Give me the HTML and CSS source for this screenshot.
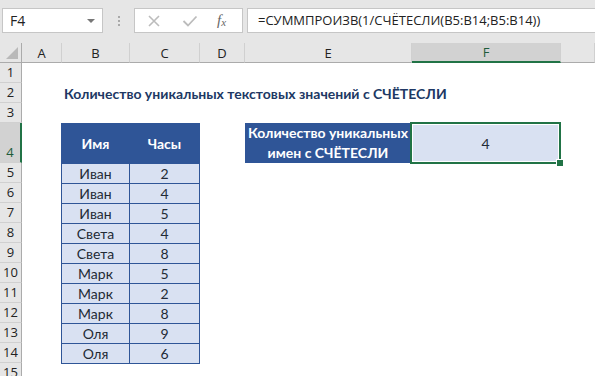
FILE: index.html
```html
<!DOCTYPE html>
<html>
	<head>
		<meta charset="utf-8" />
		<title>СЧЁТЕСЛИ</title>
		<link rel="stylesheet" href="styles.css">
	</head>
	<body>
		<div class="topbar">
			<div class="namebox">
				<span>F4</span>
				<span class="caret"></span>
			</div>
			<div class="grip"><i></i><i></i><i></i></div>
			<div class="fxbox">
				<svg width="14" height="14" viewBox="0 0 14 14"><path d="M2 2 L12 12 M12 2 L2 12" stroke="#bcbcbc" stroke-width="1.6" fill="none"/></svg>
				<svg width="16" height="14" viewBox="0 0 16 14"><path d="M1.5 7 L6 11.5 L14.5 2.5" stroke="#bcbcbc" stroke-width="1.8" fill="none"/></svg>
				<span class="fx">f<sub>x</sub></span>
			</div>
			<div class="formula">=СУММПРОИЗВ(1/СЧЁТЕСЛИ(B5:B14;B5:B14))</div>
		</div>

		<div class="sheet">
			<div class="corner"><span></span></div>
			<div class="ch">A</div>
			<div class="ch">B</div>
			<div class="ch">C</div>
			<div class="ch">D</div>
			<div class="ch">E</div>
			<div class="ch active">F</div>
			<div class="ch"></div>

			<div class="rh">1</div>
			<div class="rh">2</div>
			<div class="rh">3</div>
			<div class="rh active">4</div>
			<div class="rh">5</div>
			<div class="rh">6</div>
			<div class="rh">7</div>
			<div class="rh">8</div>
			<div class="rh">9</div>
			<div class="rh">10</div>
			<div class="rh">11</div>
			<div class="rh">12</div>
			<div class="rh">13</div>
			<div class="rh">14</div>
			<div class="rh">15</div>

			<div class="title">Количество уникальных текстовых значений с СЧЁТЕСЛИ</div>

			<table class="data">
				<tr class="head"><th>Имя</th><th>Часы</th></tr>
				<tr><td>Иван</td><td>2</td></tr>
				<tr><td>Иван</td><td>4</td></tr>
				<tr><td>Иван</td><td>5</td></tr>
				<tr><td>Света</td><td>4</td></tr>
				<tr><td>Света</td><td>8</td></tr>
				<tr><td>Марк</td><td>5</td></tr>
				<tr><td>Марк</td><td>2</td></tr>
				<tr><td>Марк</td><td>8</td></tr>
				<tr><td>Оля</td><td>9</td></tr>
				<tr><td>Оля</td><td>6</td></tr>
			</table>

			<div class="result">
				<div class="label">Количество уникальных<br>имен с СЧЁТЕСЛИ</div>
				<div class="value">4<span class="handle"></span></div>
			</div>
		</div>
	</body>
</html>
```

FILE: styles.css
```css
body {
	margin: 0;
	width: 595px;
	height: 376px;
	overflow: hidden;
	background: #fff;
	font-family: Lato, "Liberation Sans", sans-serif;
}

/* formula bar */
.topbar {
	height: 43px;
	background: #e6e6e6;
	display: flex;
	align-items: flex-start;
	padding-top: 8px;
	box-sizing: border-box;
	font-family: "Open Sans", "Noto Sans", sans-serif;
}

.namebox {
	margin-left: 2px;
	width: 101px;
	height: 25px;
	box-sizing: border-box;
	border: 1px solid #c6c6c6;
	background: #fff;
	display: flex;
	align-items: center;
	justify-content: space-between;
	padding: 0 7px 0 7px;
	font-size: 14px;
	color: #222;
}

.caret {
	width: 0;
	height: 0;
	border-left: 4px solid transparent;
	border-right: 4px solid transparent;
	border-top: 4px solid #777;
}

.grip {
	width: 31px;
	height: 25px;
	display: flex;
	flex-direction: column;
	align-items: center;
	justify-content: center;
	gap: 2px;
}

.grip i {
	width: 2px;
	height: 2px;
	background: #a9a9a9;
}

.fxbox {
	width: 109px;
	height: 25px;
	box-sizing: border-box;
	border: 1px solid #c6c6c6;
	background: #fff;
	display: flex;
	align-items: center;
	padding-left: 12px;
	gap: 21px;
}

.fx {
	font-family: "Liberation Serif", serif;
	font-style: italic;
	font-size: 15px;
	color: #666;
	margin-left: -2px;
}

.fx sub {
	font-size: 11px;
	vertical-align: -1px;
}

.formula {
	margin-left: 4px;
	flex: 1;
	height: 25px;
	box-sizing: border-box;
	border: 1px solid #c6c6c6;
	border-right: none;
	background: #fff;
	padding-left: 10px;
	font-size: 13px;
	line-height: 23px;
	color: #222;
	white-space: nowrap;
}

/* sheet grid */
.sheet {
	display: grid;
	grid-template-columns: 22px 40px 68px 70px 45px 167px 149px 34px;
	grid-template-rows: 20px 20px 20px 20px 40px repeat(11, 20px);
}

.corner {
	background: #e6e6e6;
	border-right: 1px solid #ababab;
	border-bottom: 1px solid #ababab;
	box-sizing: border-box;
	position: relative;
}

.corner span {
	position: absolute;
	right: 3px;
	bottom: 3px;
	width: 0;
	height: 0;
	border-left: 12px solid transparent;
	border-bottom: 12px solid #b9b9b9;
}

.ch {
	background: #e6e6e6;
	border-right: 1px solid #d0d0d0;
	border-bottom: 1px solid #ababab;
	box-sizing: border-box;
	font-family: "Open Sans", "Noto Sans", sans-serif;
	font-size: 13px;
	color: #222;
	display: flex;
	align-items: center;
	justify-content: center;
}

.ch.active {
	background: #d2d2d2;
	border-bottom: 2px solid #217346;
	color: #1e5c3a;
}

.rh {
	grid-column: 1;
	background: #e6e6e6;
	border-right: 1px solid #ababab;
	border-bottom: 1px solid #d0d0d0;
	box-sizing: border-box;
	font-family: "Open Sans", "Noto Sans", sans-serif;
	font-size: 13px;
	color: #222;
	display: flex;
	align-items: flex-end;
	justify-content: center;
	line-height: 19px;
}

.rh.active {
	background: #d2d2d2;
	border-right: 2px solid #217346;
	color: #1e5c3a;
}

.title {
	grid-column: 3 / 9;
	grid-row: 3;
	padding-left: 2px;
	font-weight: bold;
	font-size: 14px;
	color: #203864;
	display: flex;
	align-items: flex-end;
	line-height: 18px;
	white-space: nowrap;
}

.data {
	grid-column: 3 / 5;
	grid-row: 5 / 16;
	border-collapse: collapse;
	width: 139px;
	margin-left: -1px;
	margin-top: 0;
	font-size: 14px;
	align-self: start;
}

.data th,
.data td {
	border: 1px solid #2f5597;
	padding: 0;
	text-align: center;
}

.data th {
	height: 39px;
	background: #2f5597;
	color: #fff;
	font-weight: bold;
}

.data td {
	height: 19px;
	background: #d9e1f2;
	color: #222a35;
}

.data th:first-child,
.data td:first-child {
	width: 67px;
}

.result {
	grid-column: 6 / 8;
	grid-row: 5;
	display: flex;
}

.label {
	width: 166px;
	background: #2f5597;
	color: #fff;
	font-weight: bold;
	font-size: 14px;
	text-align: center;
	line-height: 20px;
	display: flex;
	align-items: center;
	justify-content: center;
}

.value {
	flex: 1;
	position: relative;
	background: #d9e1f2;
	border: 2px solid #217346;
	box-shadow: inset 0 0 0 1px #fff;
	margin: -1px 0 -1px -1px;
	display: flex;
	align-items: center;
	justify-content: center;
	font-size: 14px;
	color: #222a35;
}

.handle {
	position: absolute;
	right: -5px;
	bottom: -5px;
	width: 6px;
	height: 6px;
	background: #217346;
	border: 1px solid #fff;
}
```
